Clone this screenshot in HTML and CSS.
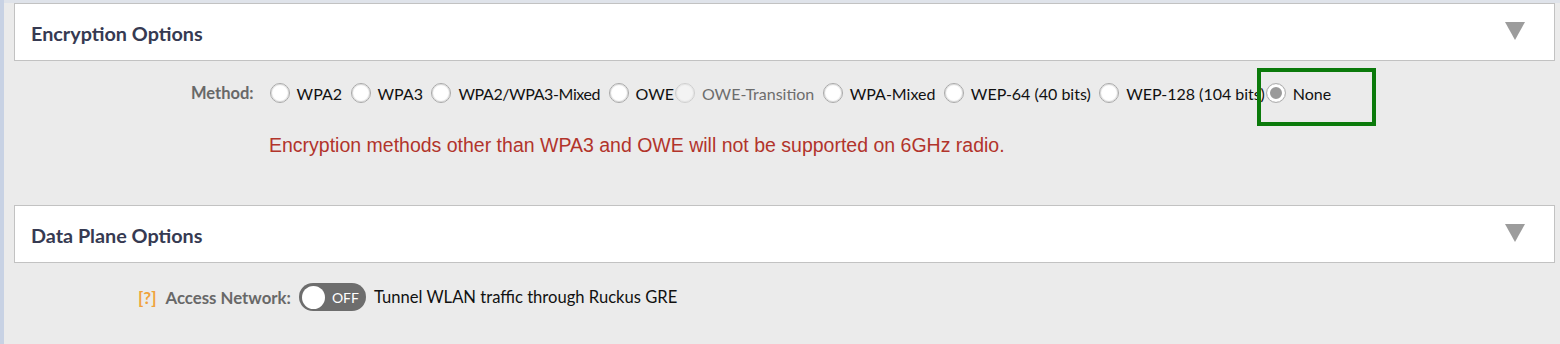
FILE: index.html
```html
<!DOCTYPE html>
<html>
<head>
<meta charset="utf-8">
<link rel="stylesheet" href="styles.css">
</head>
<body>
<div class="page">
  <div class="topbar"></div>
  <section class="panel">
    <div class="panel-head">
      <h2 class="panel-title">Encryption Options</h2>
      <span class="caret"></span>
    </div>
    <div class="method-row">
      <span class="field-label">Method:</span>
      <div class="options">
        <label class="opt"><span class="radio"></span><span class="opt-text">WPA2</span></label>
        <label class="opt"><span class="radio"></span><span class="opt-text">WPA3</span></label>
        <label class="opt"><span class="radio"></span><span class="opt-text opt-narrow">WPA2/WPA3-Mixed</span></label>
        <label class="opt opt-tight"><span class="radio"></span><span class="opt-text">OWE</span></label>
        <label class="opt opt-disabled"><span class="radio"></span><span class="opt-text">OWE-Transition</span></label>
        <label class="opt"><span class="radio"></span><span class="opt-text">WPA-Mixed</span></label>
        <label class="opt"><span class="radio"></span><span class="opt-text">WEP-64 (40 bits)</span></label>
        <label class="opt opt-tight"><span class="radio"></span><span class="opt-text">WEP-128 (104 bits)</span></label>
        <label class="opt opt-checked"><span class="radio"></span><span class="opt-text">None</span><span class="highlight"></span></label>
      </div>
    </div>
    <p class="warning">Encryption methods other than WPA3 and OWE will not be supported on 6GHz radio.</p>
  </section>
  <section class="panel panel-second">
    <div class="panel-head">
      <h2 class="panel-title">Data Plane Options</h2>
      <span class="caret"></span>
    </div>
    <div class="access-row">
      <span class="help">[?]</span>
      <span class="field-label field-label-lg">Access Network:</span>
      <span class="toggle"><span class="knob"></span><span class="toggle-text">OFF</span></span>
      <span class="toggle-desc">Tunnel WLAN traffic through Ruckus GRE</span>
    </div>
  </section>
</div>
</body>
</html>
```

FILE: styles.css
```css
html, body {
  margin: 0;
  padding: 0;
  background: #ebebeb;
}
body {
  width: 1560px;
  height: 344px;
  overflow: hidden;
  font-family: Lato, "Noto Sans", sans-serif;
}
.page {
  border-left: 4px solid #c8d2e4;
  height: 344px;
  box-sizing: border-box;
}
.topbar {
  height: 3px;
  background: #dfe3ea;
}
.panel-head {
  margin: 0 5px 0 10px;
  height: 56px;
  background: #fff;
  border: 1px solid #c2c2c2;
  display: flex;
  align-items: center;
  justify-content: space-between;
  padding: 0 29px 0 16px;
}
.panel-title {
  margin: 0;
  font-family: Lato, sans-serif;
  font-weight: 700;
  font-size: 19.8px;
  color: #363a52;
  padding-top: 2px;
}
.caret {
  width: 0;
  height: 0;
  border-left: 10px solid transparent;
  border-right: 10px solid transparent;
  border-top: 18px solid #9c9c9c;
  margin-top: -2px;
}
.method-row {
  display: flex;
  align-items: center;
  padding: 21px 0 0 187px;
  height: 22px;
}
.field-label {
  font-family: Lato, sans-serif;
  font-weight: 700;
  font-size: 16.5px;
  color: #686868;
}
.field-label-lg {
  font-size: 16.8px;
}
.options {
  display: flex;
  align-items: center;
  margin-left: 16px;
}
.opt {
  display: flex;
  align-items: center;
  position: relative;
  margin-right: 8.4px;
  font-family: Lato, sans-serif;
  font-size: 16px;
  color: #111;
}
.opt-narrow {
  letter-spacing: -0.4px;
}
.opt-tight {
  margin-right: 1px;
}
.radio {
  width: 18px;
  height: 18px;
  border-radius: 50%;
  border: 1px solid #a9a9a9;
  box-shadow: inset 0 0 1px 1px #d8d8d8;
  background: #fff;
  margin-right: 7px;
  flex: none;
}
.opt-disabled .radio {
  background: #f3f3f3;
  border-color: #cfcfcf;
  box-shadow: inset 0 0 1px 1px #e4e4e4;
}
.opt-disabled .opt-text {
  color: #6d6d6d;
}
.opt-checked .radio {
  background: #fff;
  box-shadow: inset 0 0 0 3px #fff, inset 0 0 0 10px #9a9a9a;
  border-color: #b0b0b0;
}
.highlight {
  position: absolute;
  left: -9px;
  top: -15px;
  width: 111px;
  height: 50px;
  border: 4px solid #0b7a0b;
}
.warning {
  margin: 30px 0 0 265px;
  font-family: "Liberation Sans", Arial, sans-serif;
  font-size: 19.5px;
  color: #b2342b;
  height: 71px;
}
.access-row {
  display: flex;
  align-items: center;
  padding: 20px 0 0 134px;
}
.help {
  font-family: Lato, sans-serif;
  font-weight: 700;
  font-size: 17px;
  color: #f0a23a;
  margin-right: 9px;
}
.toggle {
  display: flex;
  align-items: center;
  margin-left: 8px;
  width: 67px;
  height: 28px;
  border-radius: 14px;
  background: #6d6d6d;
  box-sizing: border-box;
  padding-left: 3px;
}
.knob {
  width: 23px;
  height: 23px;
  border-radius: 50%;
  background: #fff;
}
.toggle-text {
  margin-left: 7px;
  color: #fff;
  font-family: Lato, sans-serif;
  font-size: 14px;
}
.toggle-desc {
  margin-left: 8px;
  font-family: Lato, sans-serif;
  font-size: 16.6px;
  color: #111;
}
```
